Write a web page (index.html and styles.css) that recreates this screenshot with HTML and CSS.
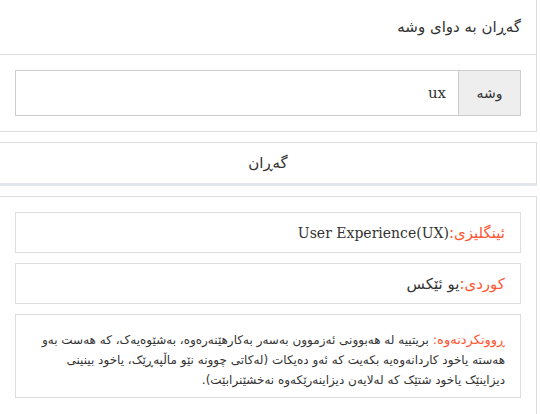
FILE: index.html
```html
<!DOCTYPE html>
<html lang="ckb" dir="rtl">
<head>
	<meta charset="utf-8">
	<title>فەرهەنگ</title>
	<link rel="stylesheet" href="styles.css">
</head>
<body>
	<div class="page">
		<div class="panel">
			<div class="panel-head">گەڕان بە دوای وشە</div>
			<div class="panel-body">
				<div class="input-group">
					<span class="addon">وشە</span>
					<input class="word" type="text" value="ux">
				</div>
			</div>
		</div>

		<button class="search-btn">گەڕان</button>

		<div class="panel result">
			<div class="row"><span class="label">ئینگلیزی:</span><span class="latin" dir="ltr">User Experience(UX)</span></div>
			<div class="row"><span class="label">کوردی:</span>یو ئێکس</div>
			<div class="desc"><span class="label">ڕوونکردنەوە:</span> بریتییە لە هەبوونی ئەزموون بەسەر بەکارهێنەرەوە، بەشێوەیەک، کە هەست بەو هەستە یاخود کاردانەوەیە بکەیت کە ئەو دەیکات (لەکاتی چوونە نێو ماڵپەڕێک، یاخود بینینی دیزاینێک یاخود شتێک کە لەلایەن دیزاینەرێکەوە نەخشێنرابێت).</div>
		</div>
	</div>
</body>
</html>
```

FILE: styles.css
```css
body{
	margin: 0;
	background: #fff;
	color: #333;
	font-family: "DejaVu Sans", sans-serif;
}
.page{
	margin: -1px 3px 0 -1px;
	display: flex;
	flex-direction: column;
	gap: 10px;
}
.panel{
	border: 1px solid #ddd;
	background: #fff;
}
.panel-head{
	height: 55px;
	box-sizing: border-box;
	padding: 0 15px;
	display: flex;
	align-items: center;
	font-size: 15px;
	border-bottom: 1px solid #ddd;
}
.panel-body{
	padding: 15px;
}
.input-group{
	display: flex;
	height: 46px;
}
.addon{
	width: 61px;
	display: flex;
	align-items: center;
	justify-content: center;
	background: #eee;
	border: 1px solid #ccc;
	font-size: 14px;
}
.word{
	flex: 1;
	border: 1px solid #ccc;
	border-right: none;
	padding: 0 12px;
	font-family: "DejaVu Serif", serif;
	font-size: 15px;
	color: #333;
	text-align: right;
	outline: none;
}
.search-btn{
	height: 44px;
	border: 1px solid #ddd;
	border-bottom: 3px solid #e3e7eb;
	background: #fff;
	font-family: "DejaVu Sans", sans-serif;
	font-size: 15px;
	color: #333;
	padding: 0;
}
.result{
	padding: 15px 15px 30px;
	display: flex;
	flex-direction: column;
	gap: 10px;
}
.row{
	border: 1px solid #ddd;
	padding: 0 15px;
	height: 41px;
	box-sizing: border-box;
	display: flex;
	align-items: center;
	font-size: 15px;
}
.label{
	color: #ff5733;
}
.latin{
	font-family: "DejaVu Serif", serif;
	font-size: 14px;
}
.desc{
	border: 1px solid #ddd;
	padding: 15px 15px 7px;
	font-size: 12px;
	line-height: 20px;
}
.desc .label{
	font-size: 13px;
}
```
